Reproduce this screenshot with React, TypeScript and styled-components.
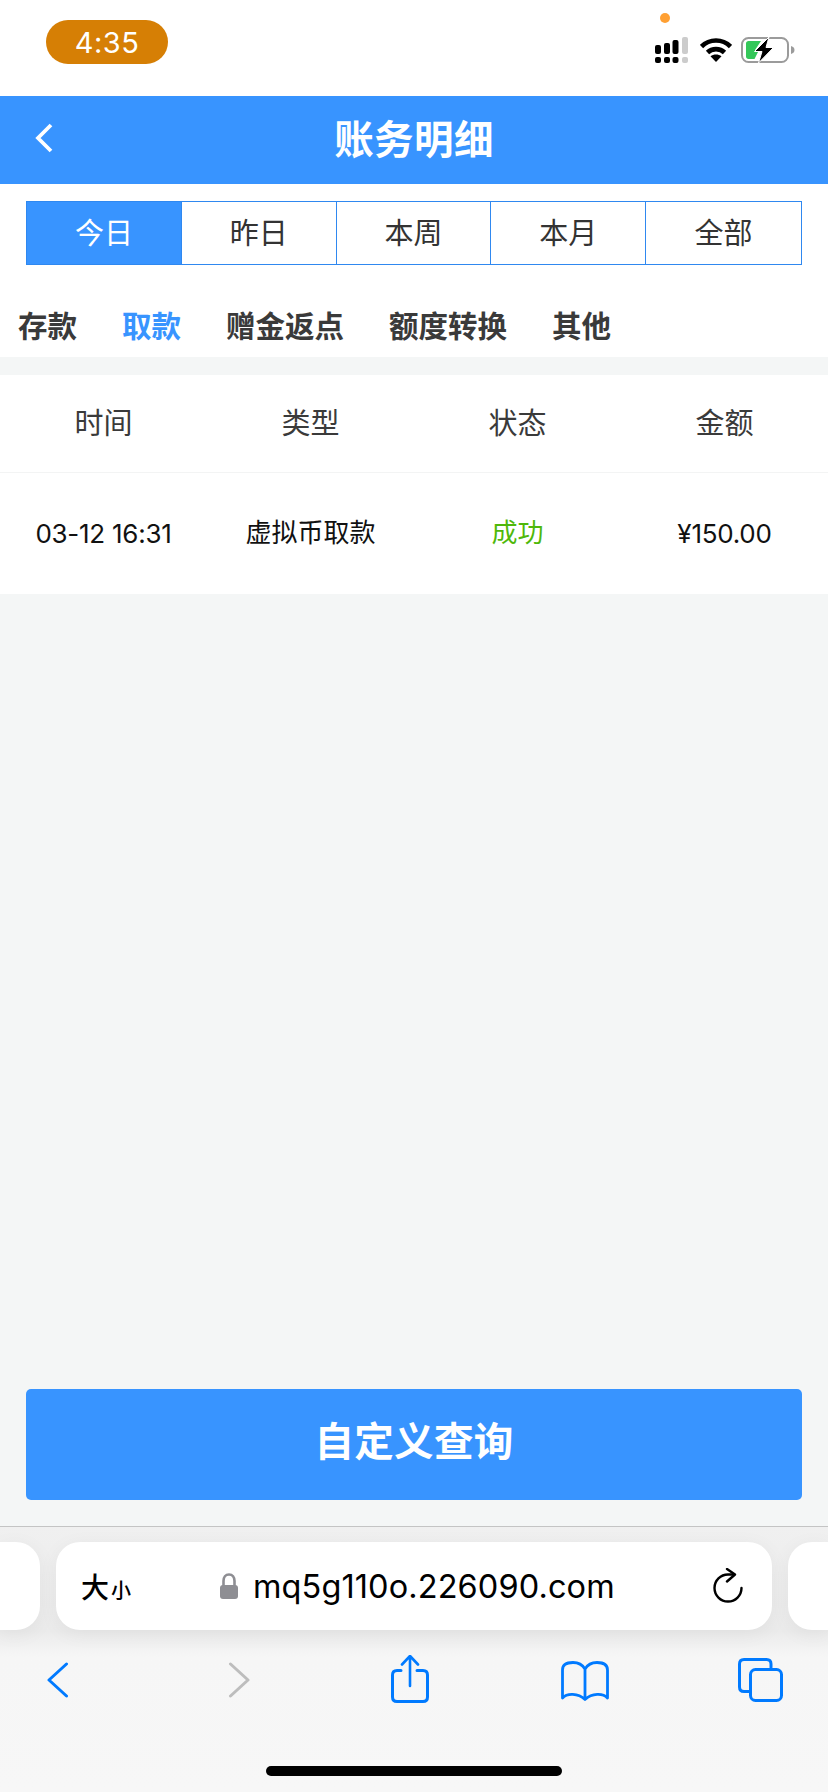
import React from 'react'
import styled, { createGlobalStyle } from 'styled-components'

const GlobalStyle = createGlobalStyle`
  html, body {
    margin: 0;
    padding: 0;
    background: #fff;
  }
  * {
    box-sizing: border-box;
  }
`

const BLUE = '#3894ff'
const IOS_BLUE = '#007aff'
const CJK = `"Inter", "Noto Sans CJK SC", sans-serif`

const Page = styled.div`
  width: 828px;
  height: 1792px;
  display: flex;
  flex-direction: column;
  background: #f4f6f6;
  font-family: ${CJK};
  overflow: hidden;
  position: relative;
`

/* status bar */
const StatusBar = styled.div`
  height: 96px;
  flex-shrink: 0;
  background: #fff;
  display: flex;
  align-items: flex-start;
  justify-content: space-between;
  padding: 20px 33px 0 46px;
`

const TimePill = styled.div`
  width: 122px;
  height: 44px;
  border-radius: 22px;
  background: #d67f05;
  color: #fff;
  font-family: "Inter", sans-serif;
  font-size: 29px;
  letter-spacing: 0.5px;
  display: flex;
  align-items: center;
  justify-content: center;
`

const StatusIcons = styled.div`
  display: flex;
  align-items: flex-start;
  gap: 12px;
  margin-top: 17px;
`

const BatteryIcon = styled.svg`
  margin-left: -3px;
`

const PrivacyDot = styled.span`
  position: absolute;
  left: 660px;
  top: 13px;
  width: 10px;
  height: 10px;
  border-radius: 50%;
  background: #ffa033;
`

/* header */
const Header = styled.header`
  height: 88px;
  flex-shrink: 0;
  background: ${BLUE};
  display: flex;
  align-items: center;
  justify-content: center;
  position: relative;
`

const BackButton = styled.svg`
  position: absolute;
  left: 33px;
  top: 26px;
`

const Title = styled.h1`
  margin: 0 0 7px;
  color: #fff;
  font-size: 39.5px;
  font-weight: 700;
  letter-spacing: 0.4px;
`

/* filters */
const FilterPanel = styled.div`
  background: #fff;
  flex-shrink: 0;
  padding-top: 17px;
`

const RangeTabs = styled.div`
  display: grid;
  grid-template-columns: repeat(5, 1fr);
  height: 64px;
  margin: 0 26px;
  border: 1px solid #2f88f0;
`

const RangeTab = styled.div<{ $active?: boolean }>`
  display: flex;
  align-items: center;
  justify-content: center;
  padding-bottom: 5px;
  font-size: 29px;
  font-weight: 400;
  color: ${(p) => (p.$active ? '#fff' : '#333')};
  background: ${(p) => (p.$active ? BLUE : '#fff')};
  border-right: 1px solid #2f88f0;
  &:last-child {
    border-right: 0;
  }
`

const TypeTabs = styled.div`
  display: flex;
  gap: 45px;
  height: 92px;
  padding: 41px 0 0 18px;
`

const TypeTab = styled.div<{ $active?: boolean }>`
  font-size: 29.5px;
  font-weight: 700;
  line-height: 41px;
  color: ${(p) => (p.$active ? BLUE : '#3a3a3a')};
`

/* table */
const Table = styled.div`
  margin-top: 18px;
  flex-shrink: 0;
  background: #fff;
`

const TableRow = styled.div<{ $head?: boolean }>`
  display: grid;
  grid-template-columns: repeat(4, 1fr);
  align-items: center;
  height: ${(p) => (p.$head ? '98px' : '121px')};
  border-bottom: ${(p) => (p.$head ? '1px solid #f3f4f4' : '0')};
`

const HeadCell = styled.div`
  text-align: center;
  padding-bottom: 5px;
  font-size: 29px;
  font-weight: 400;
  color: #3a3a3a;
`

const Cell = styled.div<{ $color?: string; $cjk?: boolean }>`
  text-align: center;
  padding-bottom: ${(p) => (p.$cjk ? '6px' : '1px')};
  font-size: 26px;
  font-weight: 400;
  letter-spacing: ${(p) => (p.$cjk ? '0' : '-0.25px')};
  color: ${(p) => p.$color || '#111'};
`

const Main = styled.main`
  flex: 1;
  display: flex;
  flex-direction: column;
  justify-content: flex-end;
  padding: 0 26px 26px;
`

const QueryButton = styled.button`
  height: 111px;
  width: 776px;
  border: 0;
  border-radius: 5px;
  padding: 0 0 13px;
  background: ${BLUE};
  color: #fff;
  font-family: ${CJK};
  font-size: 39.5px;
  font-weight: 700;
  letter-spacing: 0.3px;
`

/* safari chrome */
const BrowserBar = styled.div`
  height: 266px;
  flex-shrink: 0;
  border-top: 1px solid #c4c4c4;
  background: linear-gradient(#f0f0f0 0, #ebebeb 104px, #f6f6f6 130px, #f7f7f7 100%);
  display: flex;
  flex-direction: column;
`

const AddressRow = styled.div`
  display: flex;
  gap: 16px;
  margin-top: 15px;
  height: 88px;
  flex-shrink: 0;
`

const SidePill = styled.div<{ $side: 'left' | 'right' }>`
  width: 40px;
  background: #fff;
  border-radius: ${(p) => (p.$side === 'left' ? '0 24px 24px 0' : '24px 0 0 24px')};
  box-shadow: 0 4px 20px rgba(0, 0, 0, 0.05);
`

const AddressPill = styled.div`
  width: 716px;
  background: #fff;
  border-radius: 24px;
  box-shadow: 0 4px 20px rgba(0, 0, 0, 0.05);
  display: flex;
  align-items: center;
  padding: 0 29px 0 25px;
  color: #000;
`

const TextSize = styled.div`
  display: flex;
  align-items: baseline;
  width: 139px;
  font-family: "Noto Sans CJK SC", sans-serif;
  font-size: 28px;
  font-weight: 500;
  small {
    font-size: 20px;
    font-weight: 500;
    margin-left: 2px;
  }
`

const Url = styled.div`
  flex: 1;
  margin-left: 15px;
  font-family: "Inter", sans-serif;
  font-size: 32.5px;
  letter-spacing: 0.1px;
`

const ToolRow = styled.div`
  display: flex;
  align-items: flex-start;
  padding-left: 47px;
  height: 111px;
  flex-shrink: 0;
  margin-top: 25px;
`

const ToolIcon = styled.svg<{ $top?: number; $left?: number }>`
  display: block;
  margin-top: ${(p) => p.$top || 0}px;
  margin-left: ${(p) => p.$left || 0}px;
  fill: none;
`

const HomeIndicator = styled.div`
  width: 296px;
  height: 10px;
  border-radius: 5px;
  background: #000;
  margin-left: 266px;
`

const rangeTabs = ['今日', '昨日', '本周', '本月', '全部']
const typeTabs = ['存款', '取款', '赠金返点', '额度转换', '其他']
const heads = ['时间', '类型', '状态', '金额']

const App: React.FC = () => {
  return (
    <Page>
      <GlobalStyle />
      <StatusBar>
        <TimePill>4:35</TimePill>
        <PrivacyDot />
        <StatusIcons>
          <svg width="33" height="26" viewBox="0 0 33 26">
            <rect x="0" y="8" width="6" height="9" rx="2" fill="#000" />
            <rect x="9" y="6" width="6" height="11" rx="2" fill="#000" />
            <rect x="17.5" y="3" width="6" height="14" rx="2" fill="#000" />
            <rect x="27" y="0" width="6" height="17" rx="2" fill="#ccc" />
            <rect x="0" y="20" width="6" height="6" rx="2" fill="#000" />
            <rect x="9" y="20" width="6" height="6" rx="2" fill="#000" />
            <rect x="17.5" y="20" width="6" height="6" rx="2" fill="#000" />
            <rect x="27" y="20" width="6" height="6" rx="2" fill="#ccc" />
          </svg>
          <svg width="32" height="25" viewBox="0 0 32 25">
            <path d="M1.5 9.500C9.500 1.500 22.500 1.500 30.500 9.500" fill="none" stroke="#000" strokeWidth="4.600" />
            <path d="M7.500 15.500C12 11 20 11 24.500 15.500" fill="none" stroke="#000" strokeWidth="4.600" />
            <path d="M10.500 19.200C13.600 16.800 18.400 16.800 21.500 19.200L16 25Z" fill="#000" />
          </svg>
          <BatteryIcon width="54" height="26" viewBox="0 0 54 26">
            <rect x="1" y="1" width="46" height="24" rx="6.500" fill="none" stroke="#9b9b9b" strokeWidth="2" />
            <path d="M50 9c2.500.7 3.500 2.200 3.500 4s-1 3.300-3.500 4Z" fill="#9b9b9b" />
            <path d="M5 6.500C5 5.100 6 4 7.500 4H20L14 13H18L13.500 22H7.500C6 22 5 20.900 5 19.500Z" fill="#34c759" />
            <path d="M28 0 L13.500 14.500 H21 L17.500 26 L32.500 10.500 H25 Z" fill="#000" stroke="#fff" strokeWidth="1" />
          </BatteryIcon>
        </StatusIcons>
      </StatusBar>

      <Header>
        <BackButton width="20" height="32" viewBox="0 0 20 32" fill="none">
          <path d="M18 3L5 16L18 29" stroke="#fff" strokeWidth="3.800" />
        </BackButton>
        <Title>账务明细</Title>
      </Header>

      <FilterPanel>
        <RangeTabs>
          {rangeTabs.map((t, i) => (
            <RangeTab key={t} $active={i === 0}>{t}</RangeTab>
          ))}
        </RangeTabs>
        <TypeTabs>
          {typeTabs.map((t, i) => (
            <TypeTab key={t} $active={i === 1}>{t}</TypeTab>
          ))}
        </TypeTabs>
      </FilterPanel>

      <Table>
        <TableRow $head>
          {heads.map((h) => (
            <HeadCell key={h}>{h}</HeadCell>
          ))}
        </TableRow>
        <TableRow>
          <Cell>03-12 16:31</Cell>
          <Cell $cjk>虚拟币取款</Cell>
          <Cell $cjk $color="#4fb80a">成功</Cell>
          <Cell>¥150.00</Cell>
        </TableRow>
      </Table>

      <Main>
        <QueryButton>自定义查询</QueryButton>
      </Main>

      <BrowserBar>
        <AddressRow>
          <SidePill $side="left" />
          <AddressPill>
            <TextSize>大<small>小</small></TextSize>
            <svg width="18" height="26" viewBox="0 0 18 26" fill="none">
              <path d="M3.500 13V8C3.500 4 5.500 1.500 9 1.500s5.500 2.500 5.500 6.500V13" stroke="#8e8e93" strokeWidth="2.600" />
              <rect x="0" y="12" width="18" height="14" rx="3" fill="#8e8e93" />
            </svg>
            <Url>mq5g110o.226090.com</Url>
            <svg width="30" height="36" viewBox="0 0 30 36" fill="none">
              <path d="M21 6.500H15A13.500 13.500 0 1 0 28.500 20" stroke="#000" strokeWidth="2.400" strokeLinecap="round" />
              <path d="M14 1L22 6.500L14 13.500" stroke="#000" strokeWidth="2.400" strokeLinecap="round" strokeLinejoin="round" />
            </svg>
          </AddressPill>
          <SidePill $side="right" />
        </AddressRow>
        <ToolRow>
          <ToolIcon width="22" height="36" viewBox="0 0 22 36" $top={7}>
            <path d="M19.500 2L2 18L19.500 34" stroke={IOS_BLUE} strokeWidth="3" strokeLinecap="round" strokeLinejoin="round" />
          </ToolIcon>
          <ToolIcon width="22" height="36" viewBox="0 0 22 36" $top={7} $left={159}>
            <path d="M2.500 2L20 18L2.500 34" stroke="#bdbdbd" strokeWidth="3" strokeLinecap="round" strokeLinejoin="round" />
          </ToolIcon>
          <ToolIcon width="38" height="48" viewBox="0 0 38 48" $left={141}>
            <path d="M19 1V31M11 9.500L19 1L27 9.500" stroke={IOS_BLUE} strokeWidth="2.600" strokeLinecap="round" strokeLinejoin="round" />
            <path d="M10 15.500H6C3 15.500 1.500 17 1.500 20V42C1.500 45 3 46.500 6 46.500H32C35 46.500 36.500 45 36.500 42V20C36.500 17 35 15.500 32 15.500H26" stroke={IOS_BLUE} strokeWidth="3" strokeLinecap="round" />
          </ToolIcon>
          <ToolIcon width="48" height="40" viewBox="0 0 48 40" $top={6} $left={132}>
            <path d="M24 8C21 3 17 1.500 12 1.500C5 1.500 1.500 4 1.500 9V37C6 32 17 32 24 38.500C31 32 42 32 46.500 37V9C46.500 4 43 1.500 36 1.500C31 1.500 27 3 24 8ZM24 8V38" stroke={IOS_BLUE} strokeWidth="2.800" strokeLinejoin="round" />
          </ToolIcon>
          <ToolIcon width="45" height="45" viewBox="0 0 45 45" $top={3} $left={129}>
            <path d="M33 9.500V6C33 3 31.500 1.500 28.500 1.500H6C3 1.500 1.500 3 1.500 6V29C1.500 32 3 33.500 6 33.500H11" stroke={IOS_BLUE} strokeWidth="3" strokeLinecap="round" />
            <rect x="12.500" y="11.500" width="31" height="31" rx="5" stroke={IOS_BLUE} strokeWidth="3" />
          </ToolIcon>
        </ToolRow>
        <HomeIndicator />
      </BrowserBar>
    </Page>
  )
}

export default App
